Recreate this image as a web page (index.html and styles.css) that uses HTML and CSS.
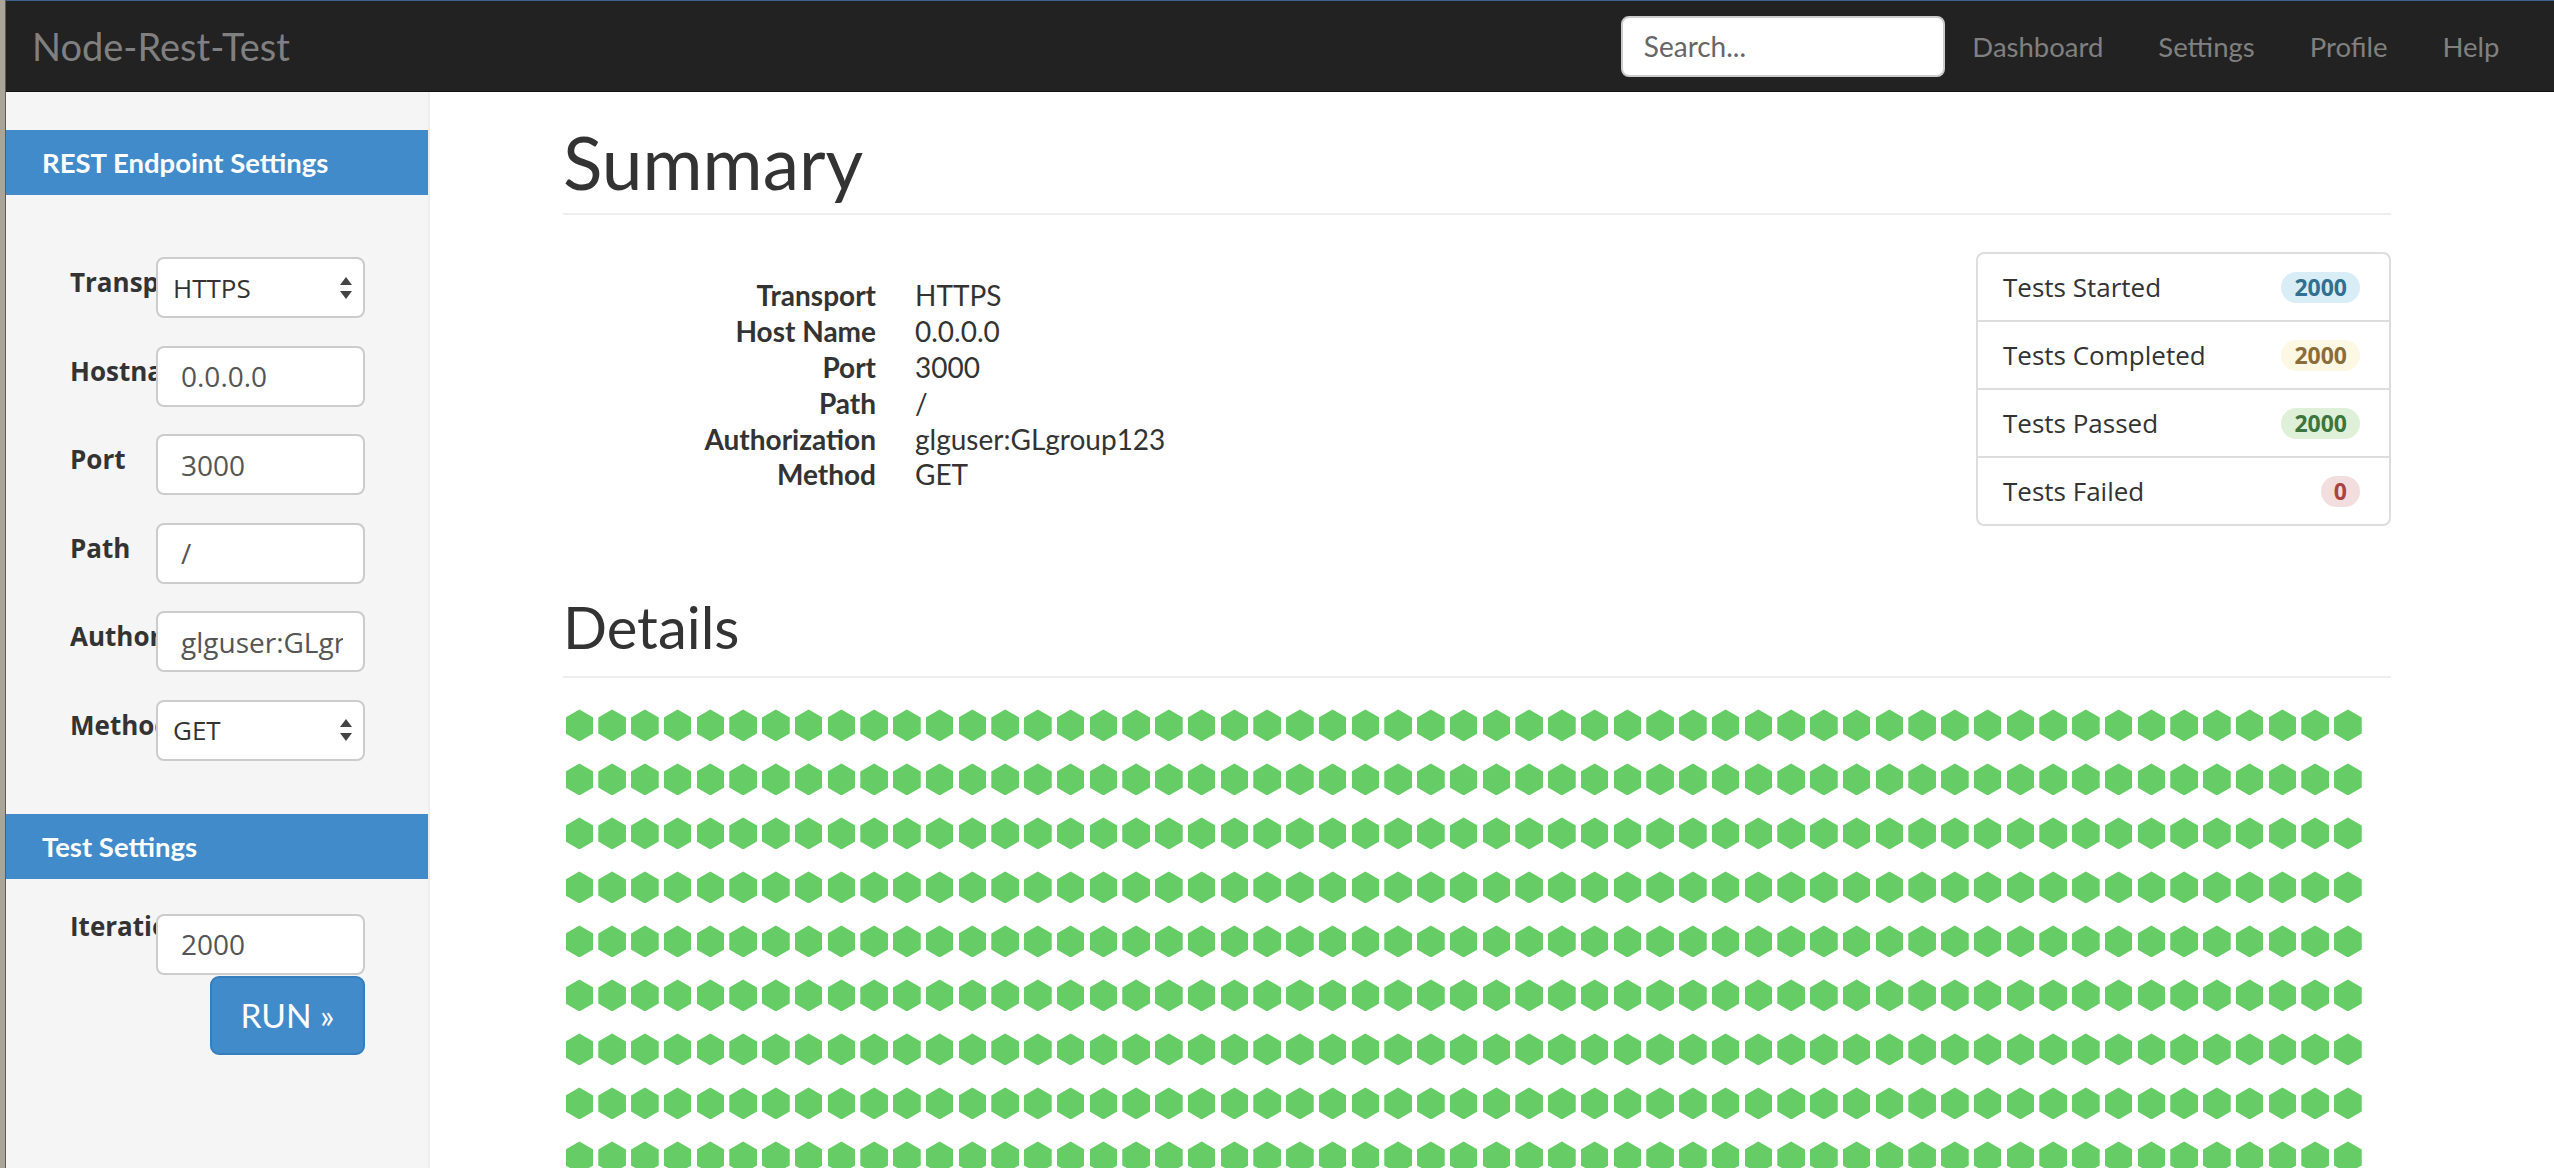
FILE: index.html
```html
<!DOCTYPE html>
<html lang="en">
<head>
<meta charset="utf-8">
<title>Node-Rest-Test</title>
<link rel="stylesheet" href="styles.css">
</head>
<body>
<div class="desk-edge"></div>
<div class="app">
  <nav class="navbar">
    <a class="brand" href="#">Node-Rest-Test</a>
    <div class="nav-right">
      <input class="search" type="text" placeholder="Search...">
      <ul class="nav-links">
        <li><a href="#">Dashboard</a></li>
        <li><a href="#">Settings</a></li>
        <li><a href="#">Profile</a></li>
        <li><a href="#">Help</a></li>
      </ul>
    </div>
  </nav>
  <div class="layout">
    <aside class="sidebar">
      <div class="side-head">REST Endpoint Settings</div>
      <form class="side-form">
        <div class="form-group">
          <label>Transport</label>
          <div class="select"><span>HTTPS</span><svg class="updown" viewBox="0 0 12 22" width="12" height="22"><polygon points="6,0 12,8 0,8"/><polygon points="0,14 12,14 6,22"/></svg></div>
        </div>
        <div class="form-group">
          <label>Hostname</label>
          <input class="field" type="text" value="0.0.0.0">
        </div>
        <div class="form-group">
          <label>Port</label>
          <input class="field" type="text" value="3000">
        </div>
        <div class="form-group">
          <label>Path</label>
          <input class="field" type="text" value="/">
        </div>
        <div class="form-group">
          <label>Authorization</label>
          <input class="field" type="text" value="glguser:GLgroup123">
        </div>
        <div class="form-group">
          <label>Method</label>
          <div class="select"><span>GET</span><svg class="updown" viewBox="0 0 12 22" width="12" height="22"><polygon points="6,0 12,8 0,8"/><polygon points="0,14 12,14 6,22"/></svg></div>
        </div>
      </form>
      <div class="side-head">Test Settings</div>
      <form class="side-form test-form">
        <div class="form-group iter">
          <label>Iterations</label>
          <input class="field" type="text" value="2000">
        </div>
        <div class="run-row"><button type="button" class="btn-run">RUN &raquo;</button></div>
      </form>
    </aside>
    <main class="main">
      <h1 class="page-header">Summary</h1>
      <div class="summary-row">
        <dl class="summary-dl">
          <dt>Transport</dt><dd>HTTPS</dd>
          <dt>Host Name</dt><dd>0.0.0.0</dd>
          <dt>Port</dt><dd>3000</dd>
          <dt>Path</dt><dd>/</dd>
          <dt>Authorization</dt><dd>glguser:GLgroup123</dd>
          <dt>Method</dt><dd>GET</dd>
        </dl>
        <ul class="list-group">
          <li>Tests Started <span class="badge info">2000</span></li>
          <li>Tests Completed <span class="badge warn">2000</span></li>
          <li>Tests Passed <span class="badge ok">2000</span></li>
          <li>Tests Failed <span class="badge fail">0</span></li>
        </ul>
      </div>
      <h2 class="page-header sub">Details</h2>
      <div class="hex-grid" id="hexGrid"></div>
    </main>
  </div>
</div>
<script src="app.js"></script>
</body>
</html>
```

FILE: styles.css
```css
html, body {
  height: 100%;
  margin: 0;
  overflow: hidden;
}
body {
  display: flex;
  background: #fff;
  color: #333;
  font-family: "Lato", "Open Sans", sans-serif;
}
.desk-edge {
  width: 5px;
  flex: none;
  background: #a9a598;
  border-right: 1px solid #5e5b55;
}
.app {
  flex: 1;
  min-width: 0;
  display: flex;
  flex-direction: column;
}
.navbar {
  flex: none;
  height: 90px;
  border-top: 1px solid #3f6291;
  border-bottom: 1px solid #111;
  background: #222;
  display: flex;
  align-items: center;
  justify-content: space-between;
  padding: 0 27px 0 26px;
}
.brand {
  font-family: "Lato", sans-serif;
  font-size: 38px;
  color: #808080;
  text-decoration: none;
}
.nav-right {
  display: flex;
  align-items: center;
}
.search {
  box-sizing: border-box;
  width: 324px;
  height: 61px;
  border: 2px solid #ccc;
  border-radius: 8px;
  padding: 0 21px;
  font-family: "Lato", sans-serif;
  font-size: 28px;
  color: #555;
  background: #fff;
  outline: none;
}
.search::placeholder {
  color: #666;
}
.nav-links {
  display: flex;
  list-style: none;
  margin: 0;
  padding: 0;
}
.nav-links a {
  display: block;
  padding: 0 27.5px;
  font-size: 27.5px;
  color: #808080;
  text-decoration: none;
}
.layout {
  flex: 1;
  min-height: 0;
  display: flex;
}
.sidebar {
  flex: none;
  width: 422px;
  border-right: 2px solid #eee;
  background: #f5f5f5;
  padding-top: 38px;
}
.side-head {
  height: 65px;
  display: flex;
  align-items: center;
  padding-left: 36px;
  background: #428bca;
  color: #fff;
  font-family: "Lato", sans-serif;
  font-weight: 700;
  font-size: 27.5px;
}
.side-form {
  display: flex;
  flex-direction: column;
  gap: 27.6px;
  padding: 62px 0 53px 64px;
  margin: 0;
}
.test-form {
  padding-top: 35px;
  gap: 0;
}
.form-group {
  display: flex;
  align-items: flex-start;
}
.form-group label {
  flex: none;
  width: 86px;
  overflow: hidden;
  white-space: nowrap;
  padding-top: 7px;
  font-family: "Open Sans", sans-serif;
  font-weight: 700;
  font-size: 26px;
  line-height: 36px;
  color: #333;
}
.form-group.iter label {
  padding-top: 0;
  margin-top: -6px;
}
.field, .select {
  box-sizing: border-box;
  width: 209px;
  height: 61px;
  border: 2px solid #ccc;
  border-radius: 8px;
  background: #fff;
}
.field {
  padding: 0 20px 0 23px;
  font-family: "Open Sans", sans-serif;
  font-size: 28px;
  color: #555;
  outline: none;
}
.select {
  display: flex;
  align-items: center;
  justify-content: space-between;
  padding: 0 11px 0 15px;
  font-family: "Open Sans", sans-serif;
  font-size: 26px;
  color: #333;
}
.updown {
  fill: #444;
}
.run-row {
  display: flex;
  justify-content: flex-end;
  width: 295px;
  margin-top: 1px;
}
.btn-run {
  width: 155px;
  height: 79px;
  border: 2px solid #357ebd;
  border-radius: 9px;
  background: #428bca;
  color: #fff;
  font-family: "Lato", sans-serif;
  font-size: 33.5px;
  padding: 0;
}
.main {
  flex: 1;
  min-width: 0;
  overflow: hidden;
  padding: 24.4px 163px 0 133px;
}
.page-header {
  margin: 0;
  font-family: "Lato", sans-serif;
  font-weight: 400;
  font-size: 73px;
  line-height: 92px;
  padding-bottom: 5px;
  border-bottom: 2px solid #eee;
  color: #333;
}
.page-header.sub {
  font-size: 58px;
  line-height: 1.2;
  margin-top: 66px;
  padding-bottom: 14px;
}
.summary-row {
  margin-top: 37px;
  display: flex;
  justify-content: space-between;
  align-items: flex-start;
}
.summary-dl {
  margin: 26px 0 0;
  display: grid;
  grid-template-columns: 313px auto;
  column-gap: 39px;
  font-family: "Lato", sans-serif;
  font-size: 28px;
  line-height: 35.8px;
}
.summary-dl dt {
  font-weight: 700;
  text-align: right;
}
.summary-dl dd {
  margin: 0;
}
.list-group {
  width: 415px;
  box-sizing: border-box;
  margin: 0;
  padding: 0;
  list-style: none;
  border: 2px solid #ddd;
  border-radius: 8px;
}
.list-group li {
  height: 66px;
  display: flex;
  align-items: center;
  justify-content: space-between;
  padding: 0 29px 0 25px;
  font-family: "Open Sans", sans-serif;
  font-size: 26px;
  color: #333;
}
.list-group li + li {
  border-top: 2px solid #ddd;
}
.badge {
  height: 31px;
  line-height: 31px;
  padding: 0 13px;
  border-radius: 16px;
  font-family: "Open Sans", sans-serif;
  font-weight: 700;
  font-size: 23px;
}
.badge.info { background: #d9edf7; color: #31708f; }
.badge.warn { background: #fcf8e3; color: #8a6d3b; }
.badge.ok { background: #dff0d8; color: #3c763d; }
.badge.fail { background: #f2dede; color: #a94442; }
.hex-grid {
  margin-top: 31.4px;
  display: grid;
  grid-template-columns: repeat(55, 32.76px);
  row-gap: 22px;
}
.hex {
  justify-self: center;
  width: 27.7px;
  height: 32px;
  background: #66cc66;
  clip-path: polygon(50% 0, 100% 25%, 100% 75%, 50% 100%, 0 75%, 0 25%);
}
```

FILE: app.js
```js
(function () {
  var grid = document.getElementById('hexGrid');
  var frag = document.createDocumentFragment();
  for (var i = 0; i < 2000; i++) {
    var cell = document.createElement('span');
    cell.className = 'hex';
    frag.appendChild(cell);
  }
  grid.appendChild(frag);
})();
```
